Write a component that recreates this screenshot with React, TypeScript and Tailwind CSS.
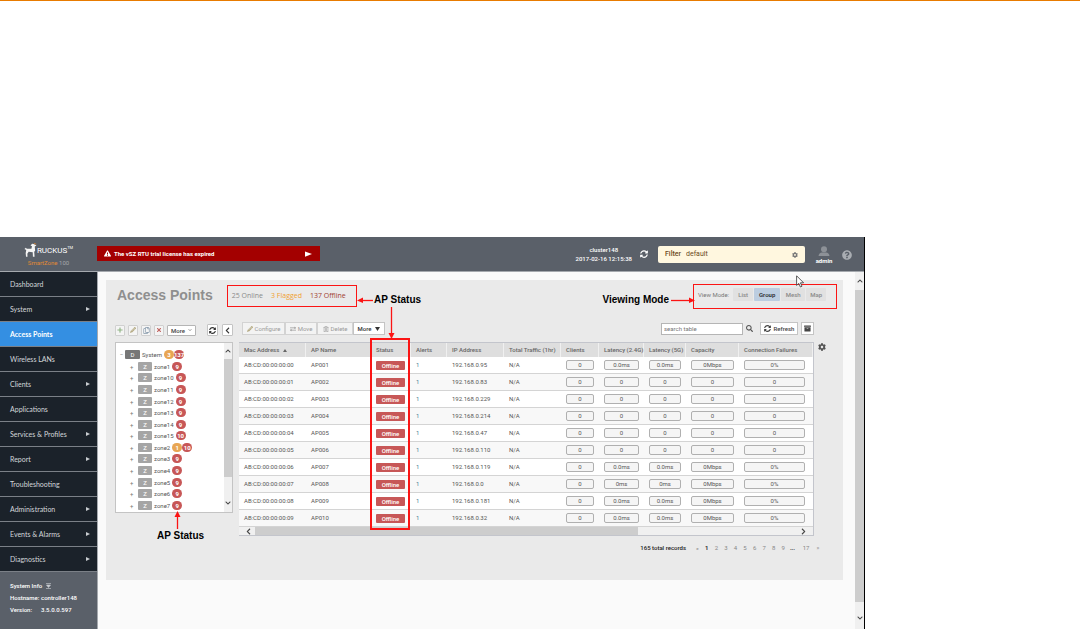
import React, { useState } from 'react';
import {
  FaArchive,
  FaChevronDown,
  FaChevronLeft,
  FaChevronRight,
  FaChevronUp,
  FaCog,
  FaExchangeAlt,
  FaExclamationTriangle,
  FaPencilAlt,
  FaPlus,
  FaQuestionCircle,
  FaRegCopy,
  FaRegTrashAlt,
  FaSearch,
  FaSyncAlt,
  FaTimes,
} from 'react-icons/fa';

const navItems = [
  { label: 'Dashboard' },
  { label: 'System', expandable: true },
  { label: 'Access Points', active: true },
  { label: 'Wireless LANs' },
  { label: 'Clients', expandable: true },
  { label: 'Applications' },
  { label: 'Services & Profiles', expandable: true },
  { label: 'Report', expandable: true },
  { label: 'Troubleshooting' },
  { label: 'Administration', expandable: true },
  { label: 'Events & Alarms', expandable: true },
  { label: 'Diagnostics', expandable: true },
];

const zones = [
  { name: 'zone1', offline: 9 },
  { name: 'zone10', offline: 9 },
  { name: 'zone11', offline: 9 },
  { name: 'zone12', offline: 9 },
  { name: 'zone13', offline: 9 },
  { name: 'zone14', offline: 9 },
  { name: 'zone15', offline: 10 },
  { name: 'zone2', flagged: 1, offline: 10 },
  { name: 'zone3', offline: 9 },
  { name: 'zone4', offline: 9 },
  { name: 'zone5', offline: 9 },
  { name: 'zone6', offline: 9 },
  { name: 'zone7', offline: 9 },
];

const columns = [
  { label: 'Mac Address', width: 'w-[67px]', sorted: true },
  { label: 'AP Name', width: 'w-[65px]' },
  { label: 'Status', width: 'w-[40px]' },
  { label: 'Alerts', width: 'w-[36px]' },
  { label: 'IP Address', width: 'w-[57px]' },
  { label: 'Total Traffic (1hr)', width: 'w-[57px]' },
  { label: 'Clients', width: 'w-[38px]' },
  { label: 'Latency (2.4G)', width: 'w-[45px]' },
  { label: 'Latency (5G)', width: 'w-[42px]' },
  { label: 'Capacity', width: 'w-[53px]' },
  { label: 'Connection Failures', width: '' },
];

const rows = [
  { mac: 'AB:CD:00:00:00:00', name: 'AP001', ip: '192.168.0.95', metrics: ['0', '0.0ms', '0.0ms', '0Mbps', '0%'] },
  { mac: 'AB:CD:00:00:00:01', name: 'AP002', ip: '192.168.0.83', metrics: ['0', '0', '0', '0', '0'] },
  { mac: 'AB:CD:00:00:00:02', name: 'AP003', ip: '192.168.0.229', metrics: ['0', '0', '0', '0', '0'] },
  { mac: 'AB:CD:00:00:00:03', name: 'AP004', ip: '192.168.0.214', metrics: ['0', '0', '0', '0', '0'] },
  { mac: 'AB:CD:00:00:00:04', name: 'AP005', ip: '192.168.0.47', metrics: ['0', '0', '0', '0', '0'] },
  { mac: 'AB:CD:00:00:00:05', name: 'AP006', ip: '192.168.0.110', metrics: ['0', '0', '0', '0', '0'] },
  { mac: 'AB:CD:00:00:00:06', name: 'AP007', ip: '192.168.0.119', metrics: ['0', '0.0ms', '0.0ms', '0Mbps', '0%'] },
  { mac: 'AB:CD:00:00:00:07', name: 'AP008', ip: '192.168.0.0', metrics: ['0', '0ms', '0ms', '0Mbps', '0%'] },
  { mac: 'AB:CD:00:00:00:08', name: 'AP009', ip: '192.168.0.181', metrics: ['0', '0.0ms', '0.0ms', '0Mbps', '0%'] },
  { mac: 'AB:CD:00:00:00:09', name: 'AP010', ip: '192.168.0.32', metrics: ['0', '0.0ms', '0.0ms', '0Mbps', '0%'] },
];

const viewModes = [
  { label: 'List', width: 'w-[20px]' },
  { label: 'Group', width: 'w-[26px]' },
  { label: 'Mesh', width: 'w-[24px]' },
  { label: 'Map', width: 'w-[20px]' },
];

const pages = ['1', '2', '3', '4', '5', '6', '7', '8', '9'];

function Logo() {
  return (
    <div className="flex w-[97px] shrink-0 flex-col items-center pt-[6px]">
      <div className="flex items-start">
        <svg viewBox="0 0 14 16" className="h-[15px] w-[13px]" aria-hidden="true">
          <path
            d="M0.5 6.5 L2 5 L3 6 L8 6 L8.6 3.4 L7 2.6 L8.8 0.8 L10.4 1 L13.4 2.6 L11.6 3.8 L12 8.4 L11 9.4 L11.4 14.6 L9.6 14.6 L9.4 10 L5 9.4 L3.6 11.6 L3.8 14.6 L2.2 14.6 L1.8 11 L2.4 7.4 Z"
            fill="#f4f4f4"
          />
          <path d="M10.6 0.3 L13.2 1.2" stroke="#e58a2e" strokeWidth="0.8" />
        </svg>
        <span className="mt-[4px] text-[8px] leading-[8px] text-white">RUCKUS</span>
        <span className="mt-[2px] text-[4px] leading-[5px] text-white">TM</span>
      </div>
      <div className="mt-[1px] text-[6px] leading-[7px] text-[#a3a7ac]">
        <span className="text-[#e08a35]">SmartZone</span> 100
      </div>
    </div>
  );
}

function Header() {
  return (
    <header className="flex h-[35px] border-b border-[#a5a9ae] bg-[#5a6069] text-white">
      <Logo />
      <div className="mt-[9px] flex h-[15px] w-[223px] items-center bg-[#a30000] pr-[8px] pl-[7px] text-[6px] font-bold">
        <FaExclamationTriangle className="mr-[3px] size-[7px]" />
        The vSZ RTU trial license has expired
        <svg viewBox="0 0 8 6" className="ml-auto h-[6px] w-[7px]" aria-hidden="true">
          <path d="M0 0 L8 3 L0 6 Z" fill="#fff" />
        </svg>
      </div>
      <div className="ml-auto flex items-start pr-[12px]">
        <div className="mt-[8px] text-center text-[6px] leading-[9px] font-medium">
          <div>cluster148</div>
          <div>2017-02-16 12:15:38</div>
        </div>
        <button type="button" aria-label="Refresh cluster" className="mt-[13px] ml-[8px]">
          <FaSyncAlt className="size-[8px]" />
        </button>
        <div className="mt-[9px] ml-[10px] flex h-[17px] w-[147px] items-center rounded-[2px] bg-[#fff7df] px-[7px] text-[7px] text-[#6b4a1c]">
          <label htmlFor="filter" className="font-medium">
            Filter
          </label>
          <input id="filter" defaultValue="default" className="ml-[5px] w-0 grow bg-transparent outline-none" />
          <FaCog className="size-[6px] text-[#777]" />
        </div>
        <div className="mt-[9px] ml-[10px] flex w-[18px] flex-col items-center text-[6px] leading-[7px] font-bold">
          <svg viewBox="0 0 12 11" className="h-[11px] w-[12px]" aria-hidden="true">
            <circle cx="6" cy="3.2" r="3" fill="#8d9197" />
            <path d="M0.5 10 Q1 7 4 6.6 L8 6.6 Q11 7 11.5 10 Z" fill="#8d9197" />
          </svg>
          admin
        </div>
        <button type="button" aria-label="Help" className="mt-[13px] ml-[9px]">
          <FaQuestionCircle className="size-[10px] text-[#a9adb2]" />
        </button>
      </div>
    </header>
  );
}

function Sidebar() {
  return (
    <aside className="flex w-[98px] shrink-0 flex-col border-r border-[#a5a9ae] bg-[#5a6069] text-[7px] text-[#d3d7da]">
      <nav className="font-[Lato,sans-serif]">
        {navItems.map((item) => (
          <a
            key={item.label}
            href="#"
            className={`flex h-[25px] items-center justify-between border-b border-[#7b8087] pr-[7px] pl-[10px] ${
              item.active ? 'bg-[#348fe2] font-bold text-white' : 'bg-[#1b222a]'
            }`}
          >
            {item.label}
            {item.expandable && (
              <svg viewBox="0 0 4 4" className="size-[4px]" aria-hidden="true">
                <path d="M0 0 L4 2 L0 4 Z" fill="#c9cdd1" />
              </svg>
            )}
          </a>
        ))}
      </nav>
      <div className="px-[10px] pt-[8px] text-[6px] leading-[12px] font-medium text-white">
        <div className="flex items-center gap-[4px]">
          System Info
          <svg viewBox="0 0 5 6" className="h-[6px] w-[5px]" aria-hidden="true">
            <path d="M0 0.5 H5 M0 5.5 H5 M0.5 2 H4.5 L2.5 4.5 Z" stroke="#c9cdd1" strokeWidth="0.6" fill="#c9cdd1" />
          </svg>
        </div>
        <dl className="grid grid-cols-[31px_1fr]">
          <dt>Hostname:</dt>
          <dd>controller148</dd>
          <dt>Version:</dt>
          <dd>3.5.0.0.597</dd>
        </dl>
      </div>
    </aside>
  );
}

function Badge({ count, flagged }: { count: number; flagged?: boolean }) {
  return (
    <span
      className={`flex h-[9px] min-w-[10px] items-center justify-center rounded-full text-[6px] font-bold text-white ${
        flagged ? 'bg-[#e8a654]' : 'bg-[#c75757]'
      }`}
    >
      {count}
    </span>
  );
}

function ZoneTree() {
  return (
    <div className="flex h-[171px] border border-[#c4c4c4] bg-white text-[6px] text-[#555]">
      <ul className="flex grow flex-col pt-[6px] pb-[1px]">
        <li className="flex flex-1 items-center pl-[2px]">
          <button type="button" aria-label="Collapse System" className="w-[7px] text-[#777]">
            −
          </button>
          <span className="mr-[2px] flex h-[9px] w-[15px] items-center justify-center rounded-[1px] bg-[#777] text-white">D</span>
          <span className="mr-[2px]">System</span>
          <Badge count={3} flagged />
          <Badge count={137} />
        </li>
        {zones.map((zone) => (
          <li key={zone.name} className="flex flex-1 items-center pl-[14px]">
            <button type="button" aria-label={`Expand ${zone.name}`} className="w-[8px] text-left text-[#777]">
              +
            </button>
            <span className="mr-[2px] flex h-[9px] w-[14px] items-center justify-center rounded-[1px] bg-[#a5a5a5] text-white">Z</span>
            <span className="mr-[2px]">{zone.name}</span>
            {zone.flagged && <Badge count={zone.flagged} flagged />}
            <Badge count={zone.offline} />
          </li>
        ))}
      </ul>
      <div className="flex w-[8px] shrink-0 flex-col items-center bg-[#f0f0f0] text-[#444]">
        <FaChevronUp className="my-[5px] size-[6px]" />
        <div className="h-[118px] w-full bg-[#cdcdcd]" />
        <FaChevronDown className="mt-auto mb-[6px] size-[6px]" />
      </div>
    </div>
  );
}

function TreeToolbar() {
  const button = 'flex h-[11px] w-[10px] items-center justify-center rounded-[1px] border border-[#d0d0d0] bg-[#f4f4f4]';
  return (
    <div className="mb-[6px] flex h-[12px] items-center">
      <div className="flex gap-[3px]">
        <button type="button" aria-label="Add" className={button}>
          <FaPlus className="size-[6px] text-[#8fb383]" />
        </button>
        <button type="button" aria-label="Edit" className={button}>
          <FaPencilAlt className="size-[6px] text-[#b5ab84]" />
        </button>
        <button type="button" aria-label="Clone" className={button}>
          <FaRegCopy className="size-[7px] text-[#8699ab]" />
        </button>
        <button type="button" aria-label="Delete zone" className={button}>
          <FaTimes className="size-[6px] text-[#c0625e]" />
        </button>
        <button
          type="button"
          className="flex h-[11px] w-[29px] items-center justify-between rounded-[1px] border border-[#b5b5b5] bg-white px-[3px] text-[6px] font-medium text-[#444]"
        >
          More <FaChevronDown className="size-[4px] text-[#999]" />
        </button>
      </div>
      <button type="button" aria-label="Reload tree" className="ml-auto flex h-[12px] w-[11px] items-center justify-center rounded-[1px] border border-[#c4c4c4] bg-white">
        <FaSyncAlt className="size-[7px] text-[#333]" />
      </button>
      <button type="button" aria-label="Hide tree" className="ml-[4px] flex h-[12px] w-[11px] items-center justify-center rounded-[1px] border border-[#c4c4c4] bg-white">
        <FaChevronLeft className="size-[7px] text-[#333]" />
      </button>
    </div>
  );
}

function TableToolbar() {
  const disabled = 'flex h-[13px] items-center justify-center gap-[2px] border border-[#d3d3d3] bg-[#f3f3f3] text-[#9a9a9a]';
  return (
    <div className="mr-[12px] mb-[7px] ml-[3px] flex h-[13px] items-center text-[6px]">
      <button type="button" disabled className={`${disabled} w-[43px]`}>
        <FaPencilAlt className="size-[6px] text-[#b5ab84]" /> Configure
      </button>
      <button type="button" disabled className={`${disabled} w-[32px]`}>
        <FaExchangeAlt className="size-[6px]" /> Move
      </button>
      <button type="button" disabled className={`${disabled} w-[36px]`}>
        <FaRegTrashAlt className="size-[6px]" /> Delete
      </button>
      <button type="button" className="flex h-[13px] w-[32px] items-center justify-center gap-[4px] border border-[#c4c4c4] bg-white font-medium text-[#333]">
        More
        <svg viewBox="0 0 5 4" className="h-[4px] w-[5px]" aria-hidden="true">
          <path d="M0 0 H5 L2.5 4 Z" fill="#333" />
        </svg>
      </button>
      <input
        type="text"
        aria-label="Search table"
        placeholder="search table"
        className="ml-auto h-[12px] w-[82px] border border-[#b5b5b5] bg-white px-[2px] text-[6px] outline-none placeholder:text-[#777]"
      />
      <button type="button" aria-label="Search" className="ml-[3px]">
        <FaSearch className="size-[7px] text-[#555]" />
      </button>
      <button type="button" className="ml-[7px] flex h-[13px] w-[38px] items-center justify-center gap-[3px] border border-[#c4c4c4] bg-white font-medium text-[#444]">
        <FaSyncAlt className="size-[7px]" /> Refresh
      </button>
      <button type="button" aria-label="Export" className="ml-[3px] flex h-[13px] w-[13px] items-center justify-center border border-[#c4c4c4] bg-white">
        <FaArchive className="size-[7px] text-[#444]" />
      </button>
    </div>
  );
}

function ApTable() {
  return (
    <div className="relative grow border-t border-r border-b border-[#c3c5cc] bg-white">
      <table className="w-full table-fixed border-separate border-spacing-0 text-left text-[6px] leading-[8px] text-[#555]">
        <thead>
          <tr className="h-[14px] bg-[#dedede] text-[#666]">
            {columns.map((col) => (
              <th key={col.label} className={`${col.width} border-r border-[#f0f0f0] p-0 pl-[5px] font-medium whitespace-nowrap`}>
                <span className="flex items-center gap-[4px]">
                  {col.label}
                  {col.sorted && (
                    <svg viewBox="0 0 4 3" className="h-[3px] w-[4px]" aria-hidden="true">
                      <path d="M0 3 L2 0 L4 3 Z" fill="#666" />
                    </svg>
                  )}
                </span>
              </th>
            ))}
          </tr>
        </thead>
        <tbody>
          {rows.map((row) => (
            <tr key={row.mac} className="h-[17px] odd:bg-white even:bg-[#f8f8f8] [&>td]:border-b [&>td]:border-[#d4d4d4] [&>td]:p-0 [&>td]:pl-[5px]">
              <td>{row.mac}</td>
              <td>{row.name}</td>
              <td>
                <span className="mt-[1px] flex h-[9px] w-[29px] items-center justify-center rounded-[1px] bg-[#c75757] font-medium text-white">
                  Offline
                </span>
              </td>
              <td>
                <a href="#" className="text-[#4a7f96]">
                  1
                </a>
              </td>
              <td>{row.ip}</td>
              <td>N/A</td>
              {row.metrics.map((value, i) => (
                <td key={i} className={i === 4 ? 'pr-[8px]!' : 'pr-[5px]!'}>
                  <span className="flex h-[10px] items-center justify-center rounded-[2px] border border-[#b0b0b0] bg-[#f5f5f5]">{value}</span>
                </td>
              ))}
            </tr>
          ))}
        </tbody>
      </table>
      <div className="flex h-[8px] items-center bg-[#f0f0f0] px-[6px] text-[#444]">
        <FaChevronLeft className="size-[7px]" />
        <div className="ml-[3px] h-full w-[383px] bg-[#cdcdcd]" />
        <FaChevronRight className="ml-auto size-[7px]" />
      </div>
      {/* callout around the Status column */}
      <div className="absolute top-[-5px] left-[131px] h-[192px] w-[40px] border-2 border-[#fb1414]" />
    </div>
  );
}

function Pagination() {
  return (
    <div className="mt-[8px] mr-[5px] flex items-center justify-end text-[6px] leading-[8px] text-[#888]">
      <span className="mr-[7px] font-medium text-[#222]">165 total records</span>
      <a href="#" className="w-[9px] text-center">«</a>
      <div className="flex w-[86px]">
        {pages.map((page) => (
          <a key={page} href="#" className={`flex-1 text-center ${page === '1' ? 'font-bold text-[#333]' : ''}`}>
            {page}
          </a>
        ))}
      </div>
      <span className="w-[9px] text-center font-bold text-[#333]">...</span>
      <a href="#" className="w-[18px] text-center">17</a>
      <a href="#" className="w-[6px] text-center">»</a>
    </div>
  );
}

function Callout({ className, children }: { className: string; children: React.ReactNode }) {
  return (
    <span className={`absolute font-['Liberation_Sans',sans-serif] text-[10px] leading-[12px] font-bold whitespace-nowrap text-black ${className}`}>
      {children}
    </span>
  );
}

function Arrow({ className, path, head, box }: { className: string; path: string; head: string; box: string }) {
  return (
    <svg viewBox={box} className={`absolute ${className}`} aria-hidden="true">
      <path d={path} stroke="#fb1414" strokeWidth="1.3" />
      <path d={head} fill="#fb1414" />
    </svg>
  );
}

export default function App() {
  const [mode, setMode] = useState('Group');

  return (
    <div className="border-t border-[#e87b00] bg-white pt-[236px] font-[Roboto,sans-serif]">
      <div className="relative mr-[215px] border-r border-black">
        <Header />
        <div className="flex bg-[#fafafa]">
          <Sidebar />
          <main className="min-w-0 grow pt-[8px] pr-[12px] pb-[49px] pl-[8px]">
            <section className="h-[300px] bg-[#eaeaea]">
              <div className="flex h-[42px] items-start pt-[4px] pr-[6px] pl-[11px]">
                <h1 className="mt-[3px] font-['Liberation_Sans',sans-serif] text-[14px] leading-[16px] font-bold text-[#8f8f8f]">
                  Access Points
                </h1>
                <div className="mt-[1px] ml-[14px] flex h-[22px] w-[130px] items-center gap-[8px] border border-[#fb1414] px-[4px] font-['Open_Sans',sans-serif] text-[7px] whitespace-nowrap">
                  <span className="text-[#8a8a8a]">25 Online</span>
                  <span className="text-[#f0a030]">3 Flagged</span>
                  <span className="text-[#a04030]">137 Offline</span>
                </div>
                <div className="ml-auto flex h-[25px] w-[144px] items-center border border-[#fb1414] pb-[4px] pl-[4px] text-[6px] text-[#777]">
                  <span className="mr-[4px]">View Mode:</span>
                  <div className="flex gap-[1px]">
                    {viewModes.map((m) => (
                      <button
                        key={m.label}
                        type="button"
                        onClick={() => setMode(m.label)}
                        className={`h-[13px] rounded-[1px] font-medium ${m.width} ${
                          m.label === mode ? 'bg-[#bccde0] text-[#222]' : 'bg-[#e1e1e1] text-[#888]'
                        }`}
                      >
                        {m.label}
                      </button>
                    ))}
                  </div>
                </div>
              </div>
              <div className="flex pl-[9px]">
                <div className="mt-[2px] w-[118px] shrink-0">
                  <TreeToolbar />
                  <ZoneTree />
                </div>
                <div className="mr-[17px] ml-[6px] min-w-0 grow">
                  <TableToolbar />
                  <div className="flex">
                    <ApTable />
                    <button type="button" aria-label="Table settings" className="mt-[1px] ml-[4px] self-start">
                      <FaCog className="size-[8px] text-[#555]" />
                    </button>
                  </div>
                  <Pagination />
                </div>
              </div>
            </section>
          </main>
          <div className="flex w-[9px] shrink-0 flex-col items-center bg-[#f0f0f0] text-[#444]">
            <FaChevronUp className="my-[6px] size-[6px]" />
            <div className="h-[312px] w-full bg-[#cdcdcd]" />
            <FaChevronDown className="mt-auto mb-[8px] size-[6px]" />
          </div>
        </div>

        {/* callouts drawn over the console */}
        <Callout className="top-[57px] left-[374px]">AP Status</Callout>
        <Arrow className="top-[60px] left-[357px] h-[6px] w-[16px]" box="0 0 16 6" path="M5 3.5 H16" head="M0 3.5 L6 0.5 L6 6 Z" />
        <Arrow className="top-[70px] left-[388px] h-[32px] w-[7px]" box="0 0 7 32" path="M3.5 0 V26" head="M0.5 26 H6.5 L3.5 32 Z" />
        <Callout className="top-[57px] right-[195px]">Viewing Mode</Callout>
        <Arrow className="top-[60px] right-[169px] h-[6px] w-[24px]" box="0 0 24 6" path="M0 3.5 H19" head="M24 3.5 L18 0.5 L18 6 Z" />
        <Callout className="top-[293px] left-[157px]">AP Status</Callout>
        <Arrow className="top-[274px] left-[174px] h-[18px] w-[7px]" box="0 0 7 18" path="M3.5 5 V18" head="M0.5 6 H6.5 L3.5 0 Z" />
        <svg viewBox="0 0 9 13" className="absolute top-[38px] right-[59px] h-[13px] w-[9px]" aria-hidden="true">
          <path d="M0.6 0.8 V10.4 L2.8 8.4 L4.4 12 L6 11.2 L4.4 7.8 H7.6 Z" fill="#fff" stroke="#333" strokeWidth="0.8" />
        </svg>
      </div>
    </div>
  );
}
